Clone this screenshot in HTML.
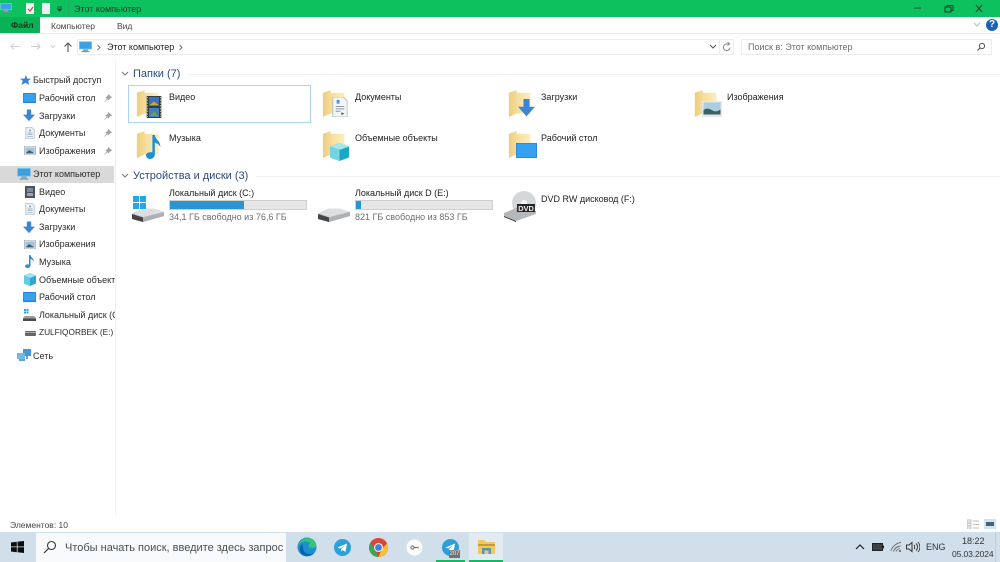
<!DOCTYPE html>
<html lang="ru"><head><meta charset="utf-8"><title>Этот компьютер</title>
<style>
html,body{margin:0;padding:0;background:#fff}
#r{position:relative;width:1000px;height:562px;overflow:hidden;background:#fff;font-family:"Liberation Sans",sans-serif;font-size:9px;color:#222;filter:blur(.35px)}
#r div,#r svg,#r span{position:absolute}
.t{white-space:nowrap;line-height:12px}
.n{color:#2b2b2b}
.h{font-size:11px;color:#2b4a80;line-height:14px;white-space:nowrap}
.g{color:#6d6d6d}
.bar{background:#e6e6e6;border:1px solid #cfcfcf;box-sizing:border-box;height:10px}
.fill{left:0;top:0;height:8px;background:#2a95d5}
</style></head><body><div id="r">
<svg width="0" height="0" style="position:absolute"><defs>
<linearGradient id="fg" x1="0" y1="0" x2="1" y2="0"><stop offset="0" stop-color="#eccd7e"/><stop offset=".45" stop-color="#f7df9e"/><stop offset="1" stop-color="#fcedc2"/></linearGradient>
<symbol id="folder" viewBox="0 0 30 32"><path d="M1 3 10 0V3H26V27H10L1 31z" fill="url(#fg)"/></symbol>
<symbol id="pc" viewBox="0 0 16 14"><rect x="0" y="0" width="16" height="10" fill="#7cc4ee"/><rect x="1" y="1" width="14" height="8" fill="#3aa0e4"/><rect x="5" y="10" width="6" height="2" fill="#8aa"/><rect x="3" y="12" width="10" height="1.4" fill="#7d8d9b"/></symbol>
<symbol id="desk" viewBox="0 0 14 12"><rect width="14" height="11" fill="#2a7fd0"/><rect x="1" y="1" width="12" height="8.5" fill="#36a2ef"/></symbol>
<symbol id="down" viewBox="0 0 14 14"><path d="M4.500 0h5v6H14L7 13.500 0 6h4.500z" fill="#3a86d6"/></symbol>
<symbol id="doc" viewBox="0 0 12 14"><path d="M1 0h7l3 3v11H1z" fill="#eef2f6" stroke="#9fb0c0" stroke-width=".8"/><path d="M3 7h6M3 9h6M3 11h6" stroke="#8fa3b5" stroke-width=".8"/><path d="M5 3h2v2H5z" fill="#5c9bd5"/></symbol>
<symbol id="img" viewBox="0 0 14 11"><rect width="14" height="11" fill="#dfe5ea" stroke="#9aa7b2" stroke-width=".8"/><rect x="1.500" y="2" width="11" height="7" fill="#9fc4dd"/><path d="M1.500 9 6 5l6.500 4z" fill="#3f5d70"/></symbol>
<symbol id="pin" viewBox="0 0 8 8"><path d="M4.500.5 7.500 3.500 6 4 4.500 6 2 3.500 4 2zM3 5 .5 7.500" fill="#a5a5a5" stroke="#a5a5a5" stroke-width=".7"/></symbol>
<symbol id="drive" viewBox="0 0 32 17"><path d="M0 9 12 4h10l10 3v4L11 17 0 14z" fill="#bfc2c5"/><path d="M0 8 11 3.500h11L32 7 11 12z" fill="#dcdedf"/><path d="M0 9 11 12.500V17L0 14z" fill="#444"/><path d="M11 12.500 32 7v4L11 17z" fill="#aeb1b4"/></symbol>
</defs></svg>

<!-- title bar -->
<div style="left:0;top:0;width:1000px;height:16.5px;background:#0bc25f"></div>
<svg style="left:0;top:3px" width="12" height="10"><use href="#pc"/></svg>
<svg style="left:26px;top:3px" width="9" height="11" viewBox="0 0 9 11"><rect width="8" height="11" fill="#f3f3f3"/><path d="M2 6l2 2 3-4" stroke="#d8442c" fill="none" stroke-width="1.200"/></svg>
<div style="left:42px;top:3px;width:8px;height:11px;background:#e9eff2"></div>
<svg style="left:56px;top:6px" width="7" height="6"><path d="M1 1h5M1.500 3 3.500 5 5.500 3z" stroke="#333" fill="#333" stroke-width=".8"/></svg>
<div style="left:68px;top:2px;width:1px;height:13px;background:#27a862"></div>
<div class="t" style="left:74px;top:3px;color:#1d3a2a;font-size:9px">Этот компьютер</div>
<svg style="left:912px;top:4px" width="80" height="10"><path d="M2 4h7" stroke="#2a5a40" stroke-width="1.200"/><path d="M33 3h6v5h-6zM35 3V1.500h6v5h-2" stroke="#1f3d2d" fill="none" stroke-width="1"/><path d="M64 1l6 7M70 1l-6 7" stroke="#1f4a35" stroke-width="1.200"/></svg>

<!-- ribbon -->
<div style="left:0;top:16.500px;width:40px;height:17px;background:#0bb155"></div>
<div class="t" style="left:11px;top:19px;color:#12331f;font-weight:bold;font-size:8.500px">Файл</div>
<div class="t" style="left:51px;top:20px;color:#444;font-size:8.500px">Компьютер</div>
<div class="t" style="left:117px;top:20px;color:#444;font-size:8.500px">Вид</div>
<div style="left:0;top:33px;width:1000px;height:1px;background:#ececec"></div>
<svg style="left:973px;top:22px" width="8" height="6"><path d="M1 1l3 3 3-3" stroke="#bbb" fill="none"/></svg>
<div style="left:986px;top:19px;width:12px;height:12px;border-radius:50%;background:#1c62b4;color:#fff;font-size:10px;font-weight:bold;line-height:12px;text-align:center">?</div>

<!-- address row -->
<svg style="left:8px;top:41px" width="70" height="12"><path d="M3 5.500h9M6 2.500l-3 3 3 3" stroke="#c9ced3" fill="none"/><path d="M23 5.500h9M29 2.500l3 3-3 3" stroke="#c9ced3" fill="none"/><path d="M43 4.500l2 2 2-2" stroke="#ccc" fill="none"/><path d="M60 11V2M56.500 5.500 60 2l3.500 3.500" stroke="#555" fill="none" stroke-width="1.100"/></svg>
<div style="left:77px;top:39px;width:657px;height:16px;border:1px solid #ececec;box-sizing:border-box"></div>
<svg style="left:79px;top:41px" width="13" height="12"><use href="#pc"/></svg>
<svg style="left:96px;top:44px" width="6" height="7"><path d="M1.500 1l2.500 2.500-2.500 2.500" stroke="#777" fill="none"/></svg>
<div class="t" style="left:107px;top:41px;color:#222;font-size:9px">Этот компьютер</div>
<svg style="left:178px;top:44px" width="6" height="7"><path d="M1.500 1l2.500 2.500-2.500 2.500" stroke="#777" fill="none"/></svg>
<svg style="left:709px;top:44px" width="8" height="6"><path d="M1 1l3 3 3-3" stroke="#555" fill="none" stroke-width="1.100"/></svg>
<div style="left:719px;top:39px;width:1px;height:16px;background:#ececec"></div>
<svg style="left:722px;top:41px" width="10" height="11" viewBox="0 0 10 11"><path d="M8 6.500A3.300 3.300 0 1 1 5 3H7M5.500 1 7.500 3 5.500 4.500" stroke="#888" fill="none"/></svg>
<div style="left:741px;top:39px;width:251px;height:16px;border:1px solid #ececec;box-sizing:border-box"></div>
<div class="t" style="left:748px;top:41px;color:#6e6e6e;font-size:9px">Поиск в: Этот компьютер</div>
<svg style="left:976px;top:42px" width="10" height="10"><circle cx="6" cy="4" r="2.600" fill="none" stroke="#555"/><path d="M4 6 1.500 8.500" stroke="#555" stroke-width="1.200"/></svg>

<!-- navigation -->
<div style="left:115px;top:60px;width:1px;height:455px;background:#f0f0f0"></div>
<div style="left:0;top:166px;width:114px;height:17px;background:#d9d9d9"></div>
<svg style="left:20px;top:75px" width="11" height="10" viewBox="0 0 12 11"><path d="M6.500 0l1.500 4h4L9 6.500 10 11 6 8.500 1.500 11 3 6.500 0 4h5z" fill="#3f83c8"/></svg>
<div class="t n" style="left:33px;top:74px">Быстрый доступ</div>
<svg style="left:23px;top:93px" width="13" height="11"><use href="#desk"/></svg>
<div class="t n" style="left:39px;top:92px">Рабочий стол</div>
<svg style="left:104px;top:94px" width="8" height="8"><use href="#pin"/></svg>
<svg style="left:23px;top:109px" width="12" height="13"><use href="#down"/></svg>
<div class="t n" style="left:39px;top:110px">Загрузки</div>
<svg style="left:104px;top:112px" width="8" height="8"><use href="#pin"/></svg>
<svg style="left:25px;top:127px" width="10" height="12"><use href="#doc"/></svg>
<div class="t n" style="left:39px;top:127px">Документы</div>
<svg style="left:104px;top:129px" width="8" height="8"><use href="#pin"/></svg>
<svg style="left:24px;top:146px" width="12" height="9"><use href="#img"/></svg>
<div class="t n" style="left:39px;top:145px">Изображения</div>
<svg style="left:104px;top:147px" width="8" height="8"><use href="#pin"/></svg>
<svg style="left:17px;top:168px" width="14" height="12"><use href="#pc"/></svg>
<div class="t n" style="left:33px;top:168px">Этот компьютер</div>
<svg style="left:25px;top:186px" width="10" height="12" viewBox="0 0 10 12"><rect width="10" height="12" fill="#4a5560"/><rect x="2" y="2" width="6" height="4" fill="#7b8a96"/><rect x="2" y="7" width="6" height="3" fill="#9ba6ae"/></svg>
<div class="t n" style="left:39px;top:186px">Видео</div>
<svg style="left:25px;top:203px" width="10" height="12"><use href="#doc"/></svg>
<div class="t n" style="left:39px;top:203px">Документы</div>
<svg style="left:23px;top:221px" width="12" height="13"><use href="#down"/></svg>
<div class="t n" style="left:39px;top:221px">Загрузки</div>
<svg style="left:24px;top:240px" width="12" height="9"><use href="#img"/></svg>
<div class="t n" style="left:39px;top:238px">Изображения</div>
<svg style="left:25px;top:255px" width="10" height="13" viewBox="0 0 10 13"><path d="M4 0h1.500c.5 3 3.500 3 3.500 6.500-1-1.500-2-2-3.500-2.500v6.500C5.500 12 4 13 2.500 13S0 12 0 11s1.500-2 4-1.500z" fill="#2a8fd8"/></svg>
<div class="t n" style="left:39px;top:256px">Музыка</div>
<svg style="left:24px;top:273px" width="12" height="13" viewBox="0 0 12 13"><path d="M6 0l6 2.500v8L6 13 0 10.500v-8z" fill="#2aa6d9"/><path d="M6 0l6 2.500L6 5 0 2.500z" fill="#a4e2ef"/><path d="M0 2.500 6 5v8L0 10.500z" fill="#62cde2"/></svg>
<div class="t n" style="left:39px;top:274px;width:76px;overflow:hidden">Объемные объекты</div>
<svg style="left:23px;top:292px" width="13" height="11"><use href="#desk"/></svg>
<div class="t n" style="left:39px;top:291px">Рабочий стол</div>
<svg style="left:23px;top:309px" width="13" height="12" viewBox="0 0 13 12"><rect x="1" y="0" width="2" height="2" fill="#2aa6e0"/><rect x="3.500" y="0" width="2" height="2" fill="#2aa6e0"/><rect x="1" y="2.500" width="2" height="2" fill="#2aa6e0"/><rect x="3.500" y="2.500" width="2" height="2" fill="#2aa6e0"/><path d="M2 7h9l2 2v3H0V9z" fill="#9a9d9f"/><rect y="9.500" width="13" height="2.500" fill="#4a4a4a"/></svg>
<div class="t n" style="left:39px;top:309px;width:76px;overflow:hidden">Локальный диск (C:)</div>
<svg style="left:25px;top:331px" width="11" height="5"><rect width="11" height="5" rx="1" fill="#666"/><rect y="1" width="11" height="1" fill="#aaa"/></svg>
<div class="t n" style="left:39px;top:326px;font-size:8.300px">ZULFIQORBEK (E:)</div>
<svg style="left:17px;top:349px" width="14" height="13" viewBox="0 0 14 13"><rect x="6" y="0" width="8" height="7" fill="#3f9ad8"/><rect x="0" y="4" width="8" height="6" fill="#6cbbe8"/><path d="M2 11h6M10 7v3" stroke="#3a7fb5" stroke-width="1.500"/></svg>
<div class="t n" style="left:33px;top:350px">Сеть</div>

<!-- headers -->
<svg style="left:121px;top:71px" width="8" height="6"><path d="M1 1l3 3 3-3" stroke="#777" fill="none"/></svg>
<div class="h" style="left:133px;top:66.500px">Папки (7)</div>
<div style="left:187px;top:74px;width:813px;height:1px;background:#f0f0f0"></div>
<svg style="left:121px;top:173px" width="8" height="6"><path d="M1 1l3 3 3-3" stroke="#777" fill="none"/></svg>
<div class="h" style="left:133px;top:168.500px">Устройства и диски (3)</div>
<div style="left:256px;top:176px;width:744px;height:1px;background:#f0f0f0"></div>

<!-- folders -->
<div style="left:128px;top:85px;width:183px;height:38px;border:1px solid #a8d6ef;box-sizing:border-box"></div>

<svg style="left:136px;top:89px" width="26" height="30"><use href="#folder"/></svg>
<svg style="left:146px;top:96px" width="16" height="22" viewBox="0 0 16 24"><rect width="16" height="24" fill="#2f3a45"/><rect x="2.500" y="1" width="11" height="10" fill="#3f6fb5"/><rect x="2.500" y="13" width="11" height="10" fill="#3f7fc0"/><path d="M3 10 8 6l5 4z" fill="#c9a83c"/><path d="M3 22 8 17l5 5z" fill="#7b9b45"/><path d="M.7 1v22M15.300 1v22" stroke="#d8c88a" stroke-width="1" stroke-dasharray="1.500 1.500"/></svg>
<div class="t" style="left:169px;top:91px">Видео</div>

<svg style="left:322px;top:89px" width="26" height="30"><use href="#folder"/></svg>
<svg style="left:332px;top:97px" width="16" height="20" viewBox="0 0 15 21"><path d="M0 0h11l4 4v17H0z" fill="#f3f5f7" stroke="#a7b3bd" stroke-width=".8"/><path d="M3 10h9M3 12.500h9M3 15h5" stroke="#8b99a6"/><path d="M4 3h3v4H4z" fill="#4c93d8"/><path d="M9 16l3 1.500-3 1.500z" fill="#4a5058"/></svg>
<div class="t" style="left:355px;top:91px">Документы</div>

<svg style="left:508px;top:89px" width="26" height="30"><use href="#folder"/></svg>
<svg style="left:518px;top:99px" width="17" height="18" viewBox="0 0 14 14" preserveAspectRatio="none"><use href="#down"/></svg>
<div class="t" style="left:541px;top:91px">Загрузки</div>

<svg style="left:694px;top:89px" width="26" height="30"><use href="#folder"/></svg>
<svg style="left:702px;top:101px" width="20" height="16"><rect width="20" height="16" fill="#e4e8ea"/><rect x="1.500" y="1.500" width="17" height="12" fill="#a7cfe0"/><path d="M1.500 13.500V9c4-2.500 6-1 9 .5s5 1 8-1v5z" fill="#3c6066"/></svg>
<div class="t" style="left:727px;top:91px">Изображения</div>

<svg style="left:136px;top:130px" width="26" height="30"><use href="#folder"/></svg>
<svg style="left:146px;top:135px" width="16" height="24" viewBox="0 0 10 13" preserveAspectRatio="none"><path d="M4 0h1.500c.5 3 3.500 3 3.500 6.500-1-1.500-2-2-3.500-2.500v6.500C5.500 12 4 13 2.500 13S0 12 0 11s1.500-2 4-1.500z" fill="#1d8fd6"/></svg>
<div class="t" style="left:169px;top:132px">Музыка</div>

<svg style="left:322px;top:130px" width="26" height="30"><use href="#folder"/></svg>
<svg style="left:330px;top:143px" width="19" height="18" viewBox="0 0 12 13" preserveAspectRatio="none"><path d="M6 0l6 2.500v8L6 13 0 10.500v-8z" fill="#1ea6c9"/><path d="M6 0l6 2.500L6 5 0 2.500z" fill="#a8e6ee"/><path d="M0 2.500 6 5v8L0 10.500z" fill="#71d5e2"/></svg>
<div class="t" style="left:355px;top:132px">Объемные объекты</div>

<svg style="left:508px;top:130px" width="26" height="30"><use href="#folder"/></svg>
<svg style="left:516px;top:143px" width="21" height="15"><rect width="21" height="15" fill="#2c8be0"/><rect x="1" y="1" width="19" height="13" fill="#35a2f1"/></svg>
<div class="t" style="left:541px;top:132px">Рабочий стол</div>

<!-- drives -->
<svg style="left:132px;top:205px" width="32" height="17"><use href="#drive"/></svg>
<svg style="left:133px;top:196px" width="13" height="13" viewBox="0 0 14 14"><path d="M0 0h6.500v6.500H0zM7.500 0H14v6.500H7.500zM0 7.500h6.500V14H0zM7.500 7.500H14V14H7.500z" fill="#1fa9e6"/></svg>
<div class="t" style="left:169px;top:187px">Локальный диск (C:)</div>
<div class="bar" style="left:169px;top:200px;width:138px"><div class="fill" style="width:74px"></div></div>
<div class="t g" style="left:169px;top:211px">34,1 ГБ свободно из 76,6 ГБ</div>

<svg style="left:318px;top:205px" width="32" height="17"><use href="#drive"/></svg>
<div class="t" style="left:355px;top:187px">Локальный диск D (E:)</div>
<div class="bar" style="left:355px;top:200px;width:138px"><div class="fill" style="width:5px"></div></div>
<div class="t g" style="left:355px;top:211px">821 ГБ свободно из 853 ГБ</div>

<svg style="left:504px;top:191px" width="32" height="31" viewBox="0 0 32 31"><circle cx="20" cy="12" r="12" fill="#d5d8db"/><circle cx="20" cy="12" r="3" fill="#f7f7f7"/><path d="M0 22 12 17 32 20v3L12 30 0 25z" fill="#b5b8bb"/><path d="M0 25 12 30v1L0 26z" fill="#333"/><rect x="13" y="13" width="18" height="8" fill="#262626"/><text x="22" y="20" font-family="Liberation Sans" font-size="7.500" font-weight="bold" text-anchor="middle" fill="#eee">DVD</text></svg>
<div class="t" style="left:541px;top:193px">DVD RW дисковод (F:)</div>

<!-- status -->
<div class="t" style="left:10px;top:519px;color:#444;font-size:8.500px">Элементов: 10</div>
<svg style="left:967px;top:519px" width="13" height="10"><path d="M0 1h4v2H0zM0 4.500h4v2H0zM0 8h4v2H0z" fill="none" stroke="#aaa" stroke-width=".7"/><path d="M6 2h6M6 5.500h6M6 9h6" stroke="#bbb"/></svg>
<svg style="left:984px;top:519px" width="12" height="10"><rect width="12" height="10" fill="#cfe4f2"/><rect x="2" y="3" width="8" height="4" fill="#47607a"/></svg>

<!-- taskbar -->
<div style="left:0;top:532px;width:1000px;height:30px;background:#d0dfe9"></div>
<svg style="left:11px;top:541px" width="13" height="12"><path d="M0 1.500 5.800.7v4.800H0zM6.600.6 13 0v5.500H6.600zM0 6.300h5.800v4.900L0 10.500zM6.600 6.300H13V12l-6.400-.8z" fill="#0c0c0c"/></svg>
<div style="left:36px;top:533px;width:250px;height:29px;background:#f7f9fa"></div>
<svg style="left:43px;top:540px" width="14" height="14"><circle cx="8.500" cy="5.500" r="4" fill="none" stroke="#333" stroke-width="1.100"/><path d="M5.500 8.500 1 13" stroke="#333" stroke-width="1.200"/></svg>
<div class="t" style="left:65px;top:541px;font-size:11px;line-height:14px;color:#4a4f54">Чтобы начать поиск, введите здесь запрос</div>

<svg style="left:297px;top:537px" width="20" height="20" viewBox="0 0 20 20"><circle cx="10" cy="10" r="9.500" fill="#1b8fd0"/><path d="M1 9C2 3 9-1 15 2c4 2 5 6 3.500 8-2 1.500-7 1.500-7-1 0-2 3-2 1-3.500C9 3 3 5 1 9z" fill="#35c47a"/><path d="M6 11c0 4 4 7 9 6 1-.3 2-1 2-1-3 3.500-10 4-13 0-2-3-1-7 1-9 0 1 1 2 1 4z" fill="#0b5ea8"/></svg>
<svg style="left:334px;top:539px" width="17" height="17"><circle cx="8.500" cy="8.500" r="8.500" fill="#2f9fd8"/><path d="M3.500 8.500 13 4.500 11.500 13 8.500 11l-1.500 1.500V10l4-3.500-5 3z" fill="#fff"/></svg>
<svg style="left:369px;top:538px" width="19" height="19" viewBox="0 0 19 19"><circle cx="9.500" cy="9.500" r="9.500" fill="#dc4437"/><path d="M18 5.500A9.500 9.500 0 0 1 9.500 19L13 11z" fill="#f7c52b"/><path d="M1.500 4.500 6 12l3.500 7A9.500 9.500 0 0 1 1.500 4.500z" fill="#3aa655"/><circle cx="9.500" cy="9.500" r="4.500" fill="#f3f3f3"/><circle cx="9.500" cy="9.500" r="3.400" fill="#3f7fd8"/></svg>
<svg style="left:406px;top:539px" width="17" height="17"><circle cx="8.500" cy="8.500" r="8" fill="#fbfcfc"/><circle cx="6.500" cy="8.500" r="1.600" fill="none" stroke="#666" stroke-width=".9"/><path d="M8 8.500h3.500" stroke="#666" stroke-width="1"/><circle cx="12" cy="8.500" r="1" fill="#d39a2a"/></svg>
<svg style="left:442px;top:539px" width="17" height="17"><circle cx="8.500" cy="8.500" r="8.500" fill="#2f9fd8"/><path d="M3.500 8.500 13 4.500 11.500 13 8.500 11l-1.500 1.500V10l4-3.500-5 3z" fill="#fff"/></svg>
<div style="left:449px;top:550px;width:11px;height:8px;background:#6f7275;color:#eee;font-size:6px;line-height:8px;text-align:center">207</div>
<div style="left:436px;top:560px;width:29px;height:2px;background:#16b864"></div>
<div style="left:469px;top:533px;width:34px;height:29px;background:#e2ebf1"></div>
<div style="left:469px;top:560px;width:34px;height:2px;background:#16b864"></div>
<svg style="left:478px;top:540px" width="17" height="14"><path d="M0 0h6l2 2h9v12H0z" fill="#f0c85c"/><rect y="4" width="17" height="2" fill="#c59a3c"/><rect x="4" y="8" width="9" height="6" fill="#5a96b8"/><rect x="6.500" y="10.500" width="4" height="3.500" fill="#f0c85c"/></svg>

<svg style="left:855px;top:543px" width="10" height="7"><path d="M1 6l4-4 4 4" stroke="#222" fill="none" stroke-width="1.200"/></svg>
<svg style="left:872px;top:543px" width="12" height="8"><rect x="0" y="0" width="11" height="8" fill="#1f2326"/><rect x="1" y="1" width="9" height="6" fill="#3c4145"/><rect x="11" y="2.500" width="1" height="3" fill="#222"/></svg>
<svg style="left:890px;top:542px" width="12" height="10" viewBox="0 0 12 10"><path d="M1 9C2 5 6 1 11 .5M3.500 9.500c1-3 3.500-5 7-5.500M6 9.500c.7-1.500 2-2.500 4-3" stroke="#666" fill="none" stroke-width=".9"/><circle cx="10" cy="9" r="1" fill="#555"/></svg>
<svg style="left:906px;top:541px" width="14" height="12" viewBox="0 0 14 12"><path d="M.5 4h2.500L6 1.500v9L3 8H.5z" fill="none" stroke="#333"/><path d="M8 4c1 1 1 3 0 4M10 2.500c2 2 2 5 0 7M12 1c2.500 3 2.500 7 0 10" fill="none" stroke="#333" stroke-width=".9"/></svg>
<div class="t" style="left:926px;top:541px;font-size:9px;color:#30353a">ENG</div>
<div class="t" style="left:962px;top:535px;font-size:9px;color:#30353a">18:22</div>
<div class="t" style="left:952px;top:547.500px;font-size:8.500px;letter-spacing:-.1px;color:#30353a">05.03.2024</div>
<div style="left:995px;top:533px;width:1px;height:29px;background:#bfcdd6"></div>
</div></body></html>
